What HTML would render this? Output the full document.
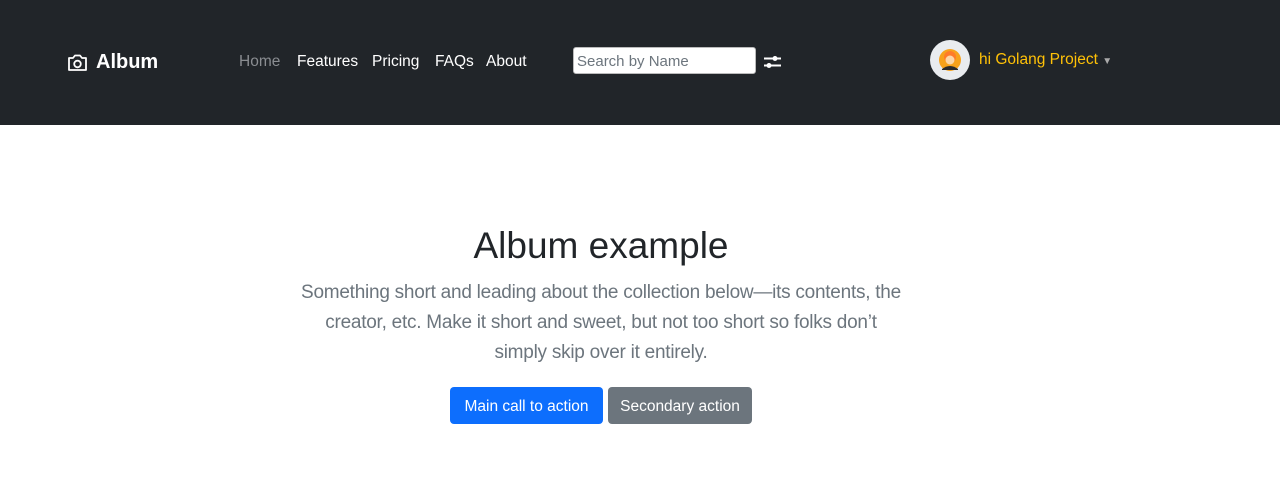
<!DOCTYPE html>
<html><head><style>
body{margin:0;width:1280px;height:492px;background:#fff;font-family:"Liberation Sans",sans-serif;overflow:hidden}
.nav{position:absolute;left:0;top:0;width:1280px;height:125px;background:#212529}
.brand{position:absolute;left:67px;top:51px;color:#fff;font-weight:bold;font-size:20px;display:flex;align-items:center}
.brand svg{margin-right:8px}
.links{position:absolute;top:53px;left:239px;font-size:15.5px;color:#fff}
.links span{position:absolute;white-space:nowrap}
.search{position:absolute;left:573px;top:47px;width:183px;height:27px;background:#fff;border:1px solid #bbb;border-radius:3px;box-sizing:border-box;font-size:15px;color:#6c757d;padding:5px 3px;line-height:17px}
.av{position:absolute;left:930px;top:40px;width:40px;height:40px;border-radius:50%;background:#e9ecef}
.user{position:absolute;left:979px;top:51px;color:#ffc107;font-size:15.5px}
h1{position:absolute;top:225px;left:0;width:1202px;text-align:center;margin:0;font-weight:300;font-size:37px;color:#212529}
p.lead{position:absolute;top:278px;left:270px;width:662px;text-align:center;margin:0;font-size:19px;letter-spacing:-0.25px;line-height:30px;font-weight:300;color:#6c757d;white-space:nowrap}
.btn{position:absolute;top:387px;height:37px;border-radius:4px;color:#fff;font-size:15.5px;line-height:39px;text-align:center}
</style></head><body>
<div class="nav">
<div class="brand"><svg width="21" height="18" viewBox="0 0 21 18" fill="none" stroke="#fff" stroke-width="1.8"><path d="M2 4h4l2-2.5h5L15 4h4v12H2z" stroke-linejoin="round"/><circle cx="10.5" cy="10" r="3.3"/></svg>Album</div>
<div class="links"><span style="left:0;color:#8a8d91">Home</span><span style="left:58px">Features</span><span style="left:133px">Pricing</span><span style="left:196px">FAQs</span><span style="left:247px">About</span></div>
<div class="search">Search by Name</div>
<svg style="position:absolute;left:763px;top:54px" width="19" height="16" viewBox="0 0 19 16"><path d="M1 4.5h17M1 11.5h17" stroke="#fff" stroke-width="2"/><circle cx="12" cy="4.5" r="2.5" fill="#fff"/><circle cx="6" cy="11.5" r="2.5" fill="#fff"/></svg>
<div class="av"><svg width="40" height="40" viewBox="0 0 40 40"><circle cx="20" cy="20" r="11" fill="#f7a21b"/><circle cx="20" cy="17" r="6" fill="#ff7b29"/><circle cx="20" cy="20" r="4.5" fill="#fcd7a8"/><path d="M12 29q8-6 16 0v1H12z" fill="#2b2b2b"/></svg></div>
<div class="user">hi Golang Project <span style="font-size:10px;color:#aaa">▼</span></div>
</div>
<h1>Album example</h1>
<p class="lead">Something short and leading about the collection below—its contents, the<br>creator, etc. Make it short and sweet, but not too short so folks don’t<br>simply skip over it entirely.</p>
<div class="btn" style="left:450px;width:153px;background:#0d6efd">Main call to action</div>
<div class="btn" style="left:608px;width:144px;background:#6c757d">Secondary action</div>
</body></html>
